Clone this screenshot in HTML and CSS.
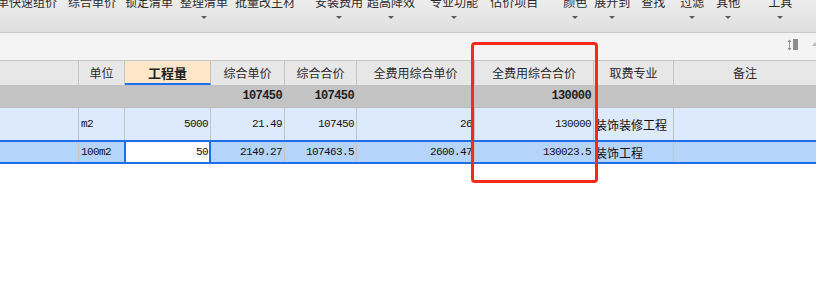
FILE: index.html
```html
<!DOCTYPE html>
<html lang="zh-CN">
<head>
<meta charset="utf-8">
<title>清单</title>
<link rel="stylesheet" href="styles.css">
</head>
<body>
<div class="toolbar">
  <div class="tool"><span class="label">清单快速组价</span></div>
  <div class="tool"><span class="label">综合单价</span></div>
  <div class="tool"><span class="label">锁定清单</span></div>
  <div class="tool"><span class="label">整理清单</span><i class="caret"></i></div>
  <div class="tool"><span class="label">批量改主材</span></div>
  <div class="tool"><span class="label">安装费用</span><i class="caret"></i></div>
  <div class="tool"><span class="label">超高降效</span><i class="caret"></i></div>
  <div class="tool"><span class="label">专业功能</span><i class="caret"></i></div>
  <div class="tool"><span class="label">估价项目</span></div>
  <div class="tool"><span class="label">颜色</span><i class="caret"></i></div>
  <div class="tool"><span class="label">展开到</span><i class="caret"></i></div>
  <div class="tool"><span class="label">查找</span></div>
  <div class="tool"><span class="label">过滤</span><i class="caret"></i></div>
  <div class="tool"><span class="label">其他</span><i class="caret"></i></div>
  <div class="tool"><span class="label">工具</span><i class="caret"></i></div>
</div>
<div class="subbar">
  <svg class="sort-icon" width="12" height="12" viewBox="0 0 12 12">
    <path d="M2.5 0.5 L0.5 3 H4.5 Z" fill="#8a8a8a"/>
    <rect x="2" y="3" width="1" height="6" fill="#9a9a9a"/>
    <path d="M2.5 11.5 L0.5 9 H4.5 Z" fill="#8a8a8a"/>
    <rect x="6" y="0" width="5" height="11" fill="#8c8c8c"/>
  </svg>
  <svg class="up-icon" width="6" height="4" viewBox="0 0 6 4"><path d="M3 0 L6 4 H0 Z" fill="#bdbdbd"/></svg>
</div>
<div class="sheet">
  <div class="row head">
    <div class="cell"></div>
    <div class="cell">单位</div>
    <div class="cell qty">工程量</div>
    <div class="cell">综合单价</div>
    <div class="cell">综合合价</div>
    <div class="cell">全费用综合单价</div>
    <div class="cell">全费用综合合价</div>
    <div class="cell">取费专业</div>
    <div class="cell">备注</div>
  </div>
  <div class="row sum">
    <div class="cell"></div>
    <div class="cell"></div>
    <div class="cell"></div>
    <div class="cell num">107450</div>
    <div class="cell num">107450</div>
    <div class="cell"></div>
    <div class="cell num">130000</div>
    <div class="cell"></div>
    <div class="cell"></div>
  </div>
  <div class="row data">
    <div class="cell"></div>
    <div class="cell txt">m2</div>
    <div class="cell num">5000</div>
    <div class="cell num">21.49</div>
    <div class="cell num">107450</div>
    <div class="cell num">26</div>
    <div class="cell num">130000</div>
    <div class="cell cjk">装饰装修工程</div>
    <div class="cell"></div>
  </div>
  <div class="row data sel">
    <div class="cell"></div>
    <div class="cell txt">100m2</div>
    <div class="cell num edit">50</div>
    <div class="cell num">2149.27</div>
    <div class="cell num">107463.5</div>
    <div class="cell num">2600.47</div>
    <div class="cell num">130023.5</div>
    <div class="cell cjk">装饰工程</div>
    <div class="cell"></div>
  </div>
  <div class="highlight"></div>
</div>
</body>
</html>
```

FILE: styles.css
```css
* { box-sizing: border-box; }
html, body {
  margin: 0;
  padding: 0;
  background: #ffffff;
  font-family: "Noto Sans CJK SC", "Noto Sans", sans-serif;
  color: #333;
}
html { overflow: hidden; }
body { min-height: 295px; }

.toolbar {
  height: 33px;
  display: flex;
  align-items: flex-start;
  background: linear-gradient(#ededed, #dedede);
  border-bottom: 1px solid #c9c9c9;
  overflow: hidden;
  white-space: nowrap;
}
.tool {
  display: flex;
  flex-direction: column;
  align-items: center;
  flex: none;
  margin-top: -6px;
}
.label {
  font-size: 12px;
  line-height: 16px;
  color: #2b2b2b;
}
.caret {
  margin-top: 6px;
  width: 0;
  height: 0;
  border-left: 3px solid transparent;
  border-right: 3px solid transparent;
  border-top: 3px solid #5a5a5a;
}
.tool:nth-child(1) { margin-left: -15px; }
.tool:nth-child(2) { margin-left: 11px; }
.tool:nth-child(3) { margin-left: 9px; }
.tool:nth-child(4) { margin-left: 7px; }
.tool:nth-child(5) { margin-left: 7px; }
.tool:nth-child(6) { margin-left: 20px; }
.tool:nth-child(7) { margin-left: 4px; }
.tool:nth-child(8) { margin-left: 15px; }
.tool:nth-child(9) { margin-left: 12px; }
.tool:nth-child(10) { margin-left: 25px; }
.tool:nth-child(11) { margin-left: 7px; }
.tool:nth-child(12) { margin-left: 11px; }
.tool:nth-child(13) { margin-left: 15px; }
.tool:nth-child(14) { margin-left: 12px; }
.tool:nth-child(15) { margin-left: 28px; }

.subbar {
  height: 27px;
  background: #f4f4f4;
  display: flex;
  align-items: flex-start;
  justify-content: flex-end;
  padding-top: 6px;
  overflow: hidden;
}
.sort-icon { flex: none; margin-right: 13px; }
.up-icon { flex: none; margin-top: 3px; margin-right: -2px; }

.sheet {
  position: relative;
  min-height: 235px;
}
.row {
  display: grid;
  grid-template-columns: 79px 46px 86px 74px 72px 118px 119px 80px 1fr;
}
.cell {
  border-right: 1px solid #c3c3c3;
  overflow: hidden;
  white-space: nowrap;
}
.cell:last-child { border-right: none; }

.head {
  height: 25px;
  border-top: 1px solid #c6c6c6;
  background: #e7e7e7;
}
.head .cell {
  text-align: center;
  font-size: 12px;
  line-height: 23px;
  color: #2a2a2a;
}
.head .qty {
  background: #fee7c9;
  font-weight: bold;
  font-size: 13px;
  color: #222;
  border-bottom: 2px solid #1d6fee;
}

.sum {
  height: 23px;
  background: #c3c3c3;
  border-bottom: 1px solid #bdbdbd;
}
.sum .cell { border-right-color: #c3c3c3; }
.sum .num {
  font-family: "Liberation Mono", monospace;
  font-weight: bold;
  font-size: 12px;
  letter-spacing: -0.6px;
  line-height: 22px;
  text-align: right;
  padding-right: 2px;
  color: #1e1e1e;
}

.data {
  height: 32px;
  background: #dde9fc;
  align-items: stretch;
}
.data .cell {
  display: flex;
  align-items: center;
  color: #111;
}
.data .num {
  justify-content: flex-end;
  padding-right: 2px;
  font-family: "Liberation Mono", monospace;
  font-size: 11px;
  letter-spacing: -0.6px;
}
.data .txt {
  padding-left: 2px;
  font-family: "Liberation Mono", monospace;
  font-size: 11px;
  letter-spacing: -0.6px;
}
.data .cjk {
  padding-left: 1px;
  font-size: 12px;
  color: #111;
}

.sel {
  height: 24px;
  background: #b5d4fc;
  border-top: 2px solid #1d6fee;
  border-bottom: 2px solid #1d6fee;
}
.sel .edit {
  background: #ffffff;
  border-left: 2px solid #1d6fee;
  border-right: 2px solid #1d6fee;
  margin-left: -1px;
  padding-right: 1px;
}

.highlight {
  position: absolute;
  left: 471px;
  top: -18px;
  width: 127px;
  height: 141px;
  border: 3px solid #f8281c;
  border-radius: 4px;
  pointer-events: none;
}
```
